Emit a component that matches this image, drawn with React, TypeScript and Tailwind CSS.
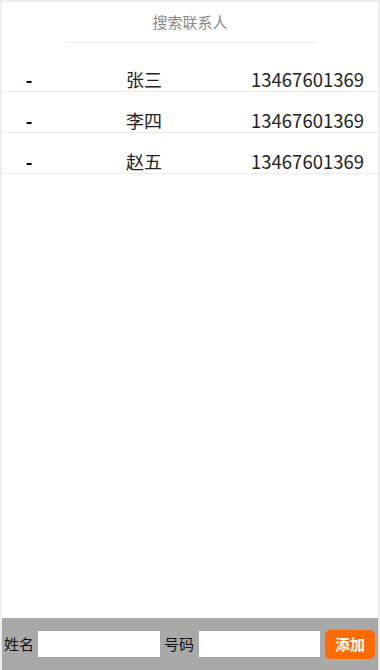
import { useState } from "react";

type Contact = { id: number; name: string; phone: string };

const initial: Contact[] = [
  { id: 1, name: "张三", phone: "13467601369" },
  { id: 2, name: "李四", phone: "13467601369" },
  { id: 3, name: "赵五", phone: "13467601369" },
];

const font = { fontFamily: '"Microsoft YaHei", "Noto Sans CJK SC", sans-serif' };

export default function App() {
  const [contacts, setContacts] = useState<Contact[]>(initial);
  const [query, setQuery] = useState("");
  const [name, setName] = useState("");
  const [phone, setPhone] = useState("");

  const shown = contacts.filter((c) => c.name.includes(query) || c.phone.includes(query));

  const add = () => {
    if (!name || !phone) return;
    setContacts([...contacts, { id: Date.now(), name, phone }]);
    setName("");
    setPhone("");
  };

  return (
    <div
      className="h-[670px] w-[380px] flex flex-col border-2 border-b-0 border-[#ececec] bg-white text-black"
      style={font}
    >
      {/* search */}
      <div className="flex justify-center mb-[8px]">
        <input
          value={query}
          onChange={(e) => setQuery(e.target.value)}
          placeholder="搜索联系人"
          className="w-[251px] h-[41px] pb-[2px] text-center text-[15px] outline-none border-b border-[#ececec] placeholder:text-[#8a8a8a]"
        />
      </div>

      {/* list */}
      <div className="flex-1">
        {shown.map((c) => (
          <div
            key={c.id}
            className="h-[41px] flex items-start pt-[16px] leading-[24px] border-b border-[#ececec] text-[18px] text-[#222]"
          >
            <button
              onClick={() => setContacts(contacts.filter((x) => x.id !== c.id))}
              className="w-[54px] text-center font-bold text-black leading-[24px]"
            >
              -
            </button>
            <div className="w-[176px] text-center">{c.name}</div>
            <div className="flex-1 text-right pr-[14px] text-[18.5px]">{c.phone}</div>
          </div>
        ))}
      </div>

      {/* add form */}
      <div className="h-[52px] bg-[#a9a9a9] flex items-center pl-[2px] text-[15px] text-[#111]">
        <span>姓名</span>
        <input
          value={name}
          onChange={(e) => setName(e.target.value)}
          className="ml-[4px] w-[122px] h-[26px] bg-white outline-none px-1"
        />
        <span className="ml-[4px]">号码</span>
        <input
          value={phone}
          onChange={(e) => setPhone(e.target.value)}
          className="ml-[5px] w-[121px] h-[26px] bg-white outline-none px-1"
        />
        <button
          onClick={add}
          className="ml-[5px] w-[50px] h-[29px] rounded-[5px] bg-[#ff6a00] text-white text-[15px] font-bold"
        >
          添加
        </button>
      </div>
    </div>
  );
}
